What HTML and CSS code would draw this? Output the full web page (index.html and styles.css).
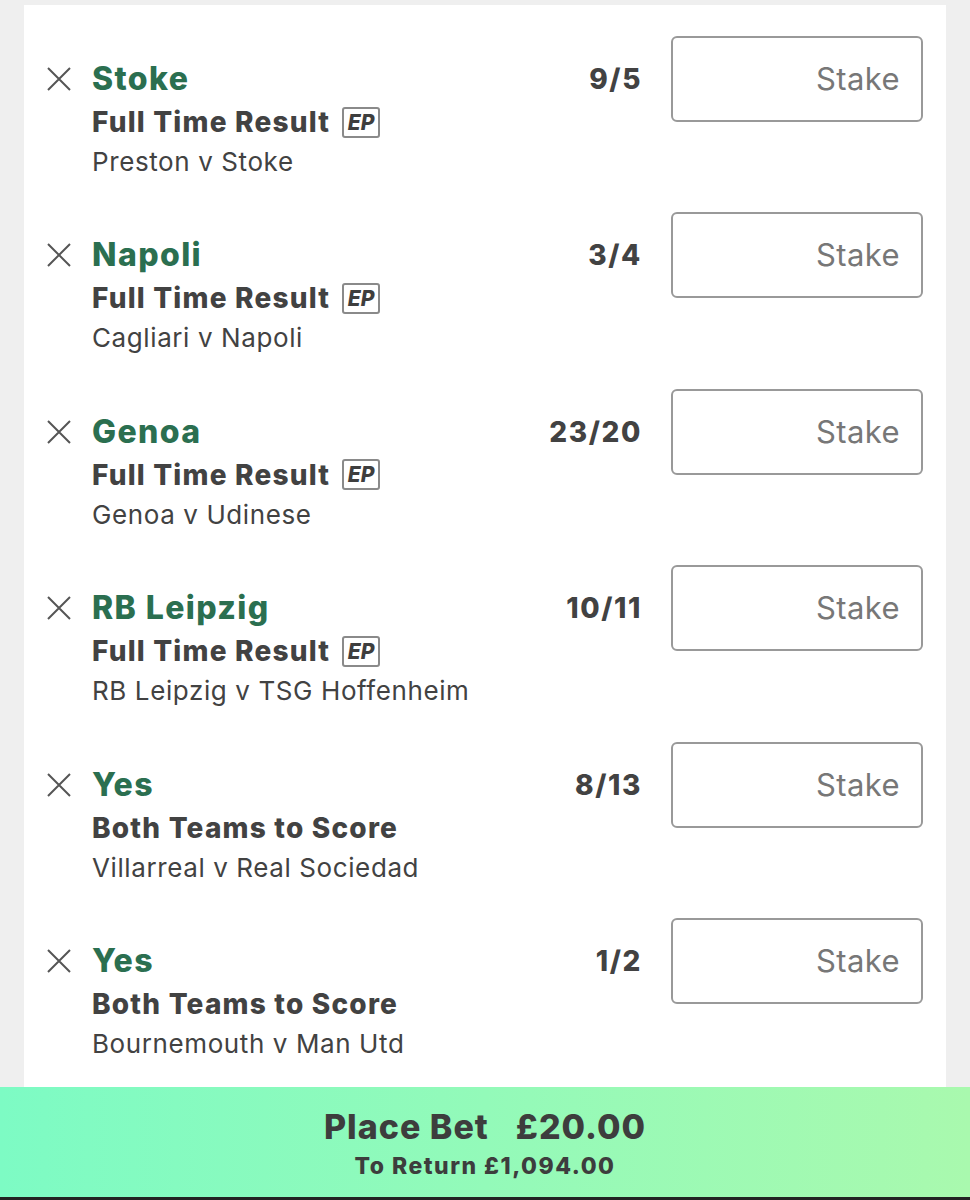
FILE: index.html
```html
<!DOCTYPE html>
<html>
<head>
<meta charset="utf-8">
<link rel="stylesheet" href="styles.css">
</head>
<body>
<div class="page">
  <div class="card">
    <div class="row">
      <svg class="remove" viewBox="0 0 24 24"><path d="M1 1L23 23M23 1L1 23"/></svg>
      <div class="info">
        <div class="sel">Stoke</div>
        <div class="market">Full Time Result <span class="ep">EP</span></div>
        <div class="match">Preston v Stoke</div>
      </div>
      <div class="odds">9/5</div>
      <div class="stake">Stake</div>
    </div>
    <div class="row">
      <svg class="remove" viewBox="0 0 24 24"><path d="M1 1L23 23M23 1L1 23"/></svg>
      <div class="info">
        <div class="sel">Napoli</div>
        <div class="market">Full Time Result <span class="ep">EP</span></div>
        <div class="match">Cagliari v Napoli</div>
      </div>
      <div class="odds">3/4</div>
      <div class="stake">Stake</div>
    </div>
    <div class="row">
      <svg class="remove" viewBox="0 0 24 24"><path d="M1 1L23 23M23 1L1 23"/></svg>
      <div class="info">
        <div class="sel">Genoa</div>
        <div class="market">Full Time Result <span class="ep">EP</span></div>
        <div class="match">Genoa v Udinese</div>
      </div>
      <div class="odds">23/20</div>
      <div class="stake">Stake</div>
    </div>
    <div class="row">
      <svg class="remove" viewBox="0 0 24 24"><path d="M1 1L23 23M23 1L1 23"/></svg>
      <div class="info">
        <div class="sel">RB Leipzig</div>
        <div class="market">Full Time Result <span class="ep">EP</span></div>
        <div class="match">RB Leipzig v TSG Hoffenheim</div>
      </div>
      <div class="odds">10/11</div>
      <div class="stake">Stake</div>
    </div>
    <div class="row">
      <svg class="remove" viewBox="0 0 24 24"><path d="M1 1L23 23M23 1L1 23"/></svg>
      <div class="info">
        <div class="sel">Yes</div>
        <div class="market">Both Teams to Score</div>
        <div class="match">Villarreal v Real Sociedad</div>
      </div>
      <div class="odds">8/13</div>
      <div class="stake">Stake</div>
    </div>
    <div class="row">
      <svg class="remove" viewBox="0 0 24 24"><path d="M1 1L23 23M23 1L1 23"/></svg>
      <div class="info">
        <div class="sel">Yes</div>
        <div class="market">Both Teams to Score</div>
        <div class="match">Bournemouth v Man Utd</div>
      </div>
      <div class="odds">1/2</div>
      <div class="stake">Stake</div>
    </div>
  </div>
  <div class="footer">
    <div class="place"><span>Place Bet</span><span>£20.00</span></div>
    <div class="return">To Return £1,094.00</div>
  </div>
  <div class="strip"></div>
</div>
</body>
</html>
```

FILE: styles.css
```css
* { box-sizing: border-box; }
html, body { margin: 0; padding: 0; }
body {
  background: #efefef;
  font-family: Inter, "Liberation Sans", sans-serif;
  color: #424242;
}
.page {
  width: 970px;
  height: 1200px;
  display: flex;
  flex-direction: column;
}
.card {
  flex: 1;
  margin: 5px 24px 0 24px;
  background: #fff;
  padding-top: 31px;
  overflow: hidden;
}
.row {
  display: flex;
  align-items: flex-start;
  height: 176.4px;
  padding: 0 23px 0 23px;
}
.remove {
  width: 24px;
  height: 24px;
  margin-top: 31px;
  flex: none;
  stroke: #555;
  stroke-width: 2;
  fill: none;
}
.info {
  flex: 1;
  padding-left: 21px;
  padding-top: 23px;
}
.sel {
  font-size: 32px;
  font-weight: 800;
  line-height: 40px;
  color: #2b6f50;
  letter-spacing: 1.4px;
}
.market {
  margin-top: 3px;
  font-size: 28px;
  font-weight: 800;
  line-height: 40px;
  display: flex;
  align-items: center;
  letter-spacing: 1.2px;
}
.ep {
  display: inline-flex;
  align-items: center;
  justify-content: center;
  margin-left: 12px;
  width: 38px;
  height: 31px;
  border: 2px solid #8a8a8a;
  border-radius: 3px;
  font-size: 21px;
  font-style: italic;
  font-weight: 800;
  line-height: 1;
  letter-spacing: 0;
  color: #3e3e3e;
}
.match {
  margin-top: 0;
  font-size: 26px;
  font-weight: 400;
  line-height: 40px;
  letter-spacing: 0.6px;
}
.odds {
  font-size: 28px;
  font-weight: 800;
  line-height: 40px;
  margin-top: 23px;
  margin-right: 29px;
  text-align: right;
  letter-spacing: 1.6px;
}
.stake {
  width: 252px;
  height: 86px;
  flex: none;
  border: 2px solid #999;
  border-radius: 6px;
  font-size: 31px;
  color: #777;
  text-align: right;
  padding-right: 21px;
  line-height: 82px;
  letter-spacing: 0.4px;
}
.footer {
  height: 110px;
  flex: none;
  background: linear-gradient(90deg, #7dfbc4 0%, #a9f9ae 100%);
  display: flex;
  flex-direction: column;
  align-items: center;
  font-weight: 800;
  color: #3d3d3d;
}
.place {
  margin-top: 20px;
  font-size: 34px;
  line-height: 40px;
  display: flex;
  gap: 27px;
  letter-spacing: 1px;
}
.return {
  margin-top: 5px;
  font-size: 23px;
  line-height: 28px;
  letter-spacing: 1.5px;
}
.strip {
  height: 3px;
  flex: none;
  background: #222;
}
```
